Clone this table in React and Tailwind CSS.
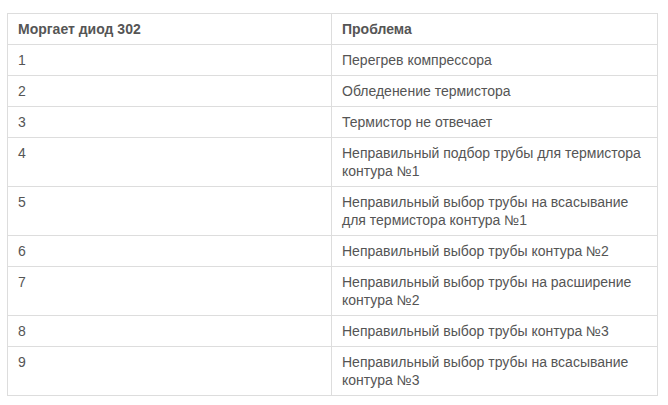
import React from "react";

const rows = [
  ["1", "Перегрев компрессора"],
  ["2", "Обледенение термистора"],
  ["3", "Термистор не отвечает"],
  ["4", "Неправильный подбор трубы для термистора контура №1"],
  ["5", "Неправильный выбор трубы на всасывание для термистора контура №1"],
  ["6", "Неправильный выбор трубы контура №2"],
  ["7", "Неправильный выбор трубы на расширение контура №2"],
  ["8", "Неправильный выбор трубы контура №3"],
  ["9", "Неправильный выбор трубы на всасывание контура №3"],
];

export default function App() {
  return (
    <div className="w-[668px] h-[405px] bg-white pt-[13px] pl-[7px] font-['Liberation_Sans',Arial,sans-serif] text-[14px] leading-[18px] text-[#555]">
      <table className="w-[651px] border-collapse table-fixed">
        <colgroup>
          <col className="w-[324px]" />
          <col />
        </colgroup>
        <thead>
          <tr>
            <th className="border border-[#ddd] px-[10px] py-[6px] text-left font-bold">
              Моргает диод 302
            </th>
            <th className="border border-[#ddd] px-[10px] py-[6px] text-left font-bold">
              Проблема
            </th>
          </tr>
        </thead>
        <tbody>
          {rows.map(([code, text]) => (
            <tr key={code}>
              <td className="border border-[#ddd] px-[10px] py-[6px] align-top">{code}</td>
              <td className="border border-[#ddd] px-[10px] py-[6px] align-top">{text}</td>
            </tr>
          ))}
        </tbody>
      </table>
    </div>
  );
}
